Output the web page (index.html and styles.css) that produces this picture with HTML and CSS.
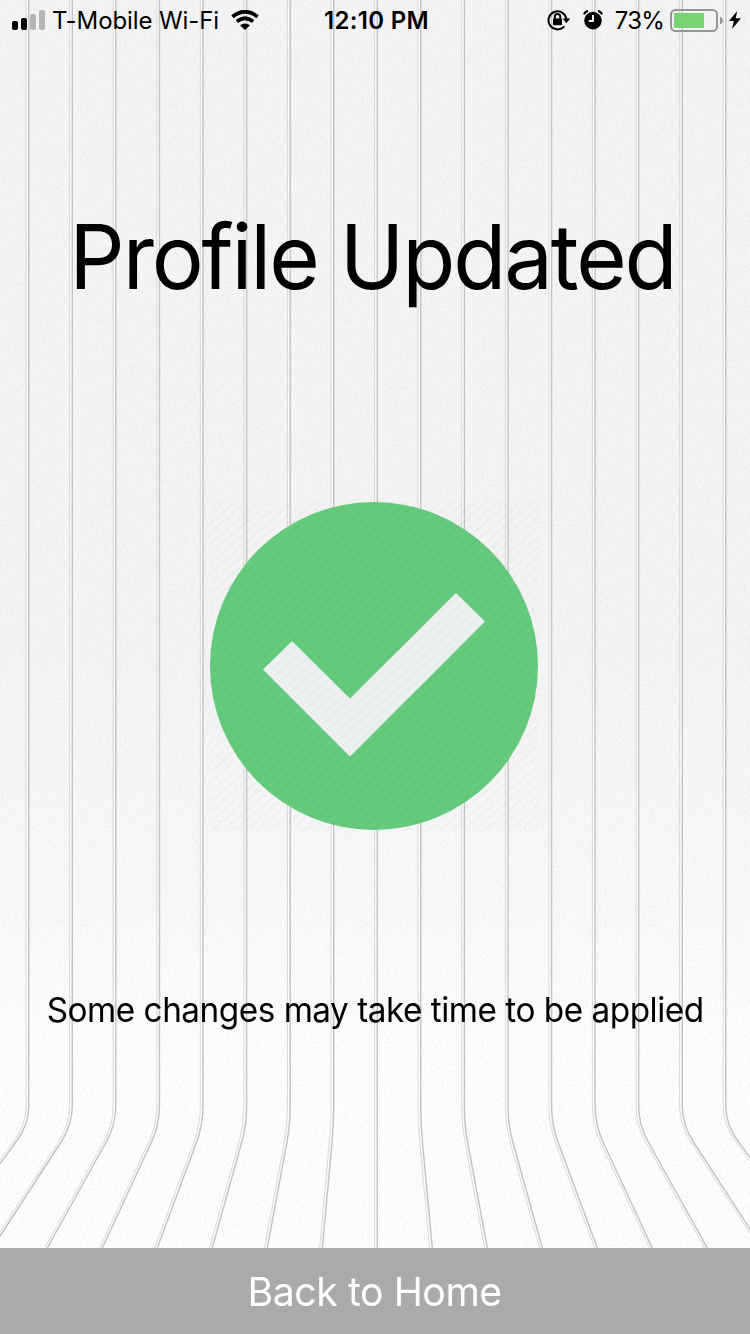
FILE: index.html
```html
<!DOCTYPE html>
<html lang="en">
<head>
<meta charset="utf-8">
<title>Profile Updated</title>
<link rel="stylesheet" href="styles.css">
</head>
<body>
<div class="screen">
  <svg class="backdrop" viewBox="0 0 750 1248" aria-hidden="true">
    <defs>
      <filter id="grain" x="0" y="0" width="100%" height="100%">
        <feTurbulence type="fractalNoise" baseFrequency="0.45" numOctaves="2" seed="4"/>
        <feColorMatrix values="0 0 0 0 0  0 0 0 0 0  0 0 0 0 0  0.08 0 0 0 -0.032"/>
      </filter>
      <g id="seams">
        <path d="M29 0V1106Q29 1125 16.2 1142L-62.5 1248"/>
        <path d="M72.5 0V1106Q72.5 1125 61.3 1142L-7.5 1248"/>
        <path d="M116 0V1106Q116 1125 106.4 1142L47.5 1248"/>
        <path d="M159.7 0V1106Q159.7 1125 151.7 1142L102.5 1248"/>
        <path d="M203.2 0V1106Q203.2 1125 196.8 1142L157.5 1248"/>
        <path d="M246.8 0V1106Q246.8 1125 242 1142L212.5 1248"/>
        <path d="M290.4 0V1106Q290.4 1125 287.2 1142L267.5 1248"/>
        <path d="M333.9 0V1106Q333.9 1125 332.3 1142L322.5 1248"/>
        <path d="M377.5 0V1248"/>
        <path d="M421 0V1106Q421 1125 422.6 1142L432.5 1248"/>
        <path d="M464.6 0V1106Q464.6 1125 467.8 1142L487.5 1248"/>
        <path d="M508.2 0V1106Q508.2 1125 513 1142L542.5 1248"/>
        <path d="M551.8 0V1106Q551.8 1125 558.2 1142L597.5 1248"/>
        <path d="M595.3 0V1106Q595.3 1125 603.3 1142L652.5 1248"/>
        <path d="M638.9 0V1106Q638.9 1125 648.5 1142L707.5 1248"/>
        <path d="M682.5 0V1106Q682.5 1125 693.7 1142L762.5 1248"/>
        <path d="M726 0V1106Q726 1125 738.8 1142L817.5 1248"/>
      </g>
    </defs>
    <rect width="750" height="1248" filter="url(#grain)"/>
    <use href="#seams" class="seam-glow" x="-1.4"/>
    <use href="#seams" class="seam-light" x="-2.9"/>
    <use href="#seams" class="seam-dark" x="-0.2"/>
  </svg>

  <header class="status">
    <div class="status-left">
      <svg class="signal" width="34" height="20" viewBox="0 0 34 20">
        <rect x="0" y="11" width="6" height="9" rx="2"/>
        <rect x="9" y="8" width="6" height="12" rx="2"/>
        <rect class="dim" x="18" y="4" width="6" height="16" rx="2"/>
        <rect class="dim" x="27" y="0" width="6" height="20" rx="2"/>
      </svg>
      <span class="carrier">T-Mobile Wi-Fi</span>
      <svg class="wifi" width="28" height="20" viewBox="0 0 28 20">
        <path class="arc" d="M1.4 6.800Q14-3.200 26.600 6.800"/>
        <path class="arc" d="M5.800 11.400Q14 5 22.200 11.400"/>
        <path d="M9 15.200Q14 11.600 19 15.200L14 20Z"/>
      </svg>
    </div>
    <time class="clock">12:10 PM</time>
    <div class="status-right">
      <svg class="lock" width="24" height="22" viewBox="0 0 24 22">
        <path class="ring" d="M17.2 17.4A9 9 0 1 1 19.4 10"/>
        <path d="M15.500 9.400H23.200L19.400 14.200Z"/>
        <rect x="6" y="9.400" width="9" height="6.800" rx="1"/>
        <path class="ring" d="M7.800 10V7.600a2.700 2.700 0 0 1 5.400 0V10"/>
      </svg>
      <svg class="alarm" width="20" height="20" viewBox="0 0 20 20">
        <circle cx="10" cy="10.600" r="8.800"/>
        <path class="bell" d="M1 4.400Q2 1.600 5 1M19 4.400Q18 1.600 15 1"/>
        <path class="hands" d="M10 5V11H5.700"/>
      </svg>
      <span class="percent">73%</span>
      <svg class="battery" width="54" height="23" viewBox="0 0 54 23">
        <rect class="case" x="1" y="1" width="46" height="21" rx="4.500"/>
        <rect class="charge" x="4" y="4" width="30" height="15"/>
        <path class="cap" d="M50 7.500Q53 9 53 11.500T50 15.500Z"/>
      </svg>
      <svg class="bolt" width="12" height="18" viewBox="0 0 12 18">
        <path d="M8.200 0L0 10H4.800L3 18L12 7.300H6.700Z"/>
      </svg>
    </div>
  </header>

  <main class="content">
    <h1 class="title">Profile Updated</h1>
    <svg class="badge" width="328" height="328" viewBox="0 0 328 328" role="img" aria-label="Success">
      <defs>
        <pattern id="hatch" width="7.500" height="7.500" patternUnits="userSpaceOnUse" patternTransform="rotate(49)">
          <rect width="3" height="7.500"/>
        </pattern>
      </defs>
      <circle class="disc" cx="164" cy="164" r="164"/>
      <path class="tick" d="M82 139L53 167.500L140 254.500L275 119.500L246 91L140 196.500Z"/>
      <rect class="hatching" width="328" height="328" fill="url(#hatch)"/>
    </svg>
    <p class="note">Some changes may take time to be applied</p>
  </main>

  <button class="home" type="button"><span class="home-label">Back to Home</span></button>
</div>
</body>
</html>
```

FILE: styles.css
```css
body {
  margin: 0;
  font-family: Inter, "Liberation Sans", sans-serif;
  color: #000;
}

.screen {
  position: relative;
  display: flex;
  flex-direction: column;
  width: 750px;
  height: 1334px;
  overflow: hidden;
  background: linear-gradient(#f5f5f5 0, #f5f5f5 650px, #f9f9f9 900px, #fefefe 1060px);
}

.backdrop {
  position: absolute;
  top: 0;
  left: 0;
  width: 750px;
  height: 1248px;
}

.seam-glow, .seam-light, .seam-dark { fill: none; }
.seam-glow { stroke: #fafafa; stroke-width: 2; }
.seam-light { stroke: #dadada; stroke-width: 1; }
.seam-dark { stroke: #c2c2c2; stroke-width: 1.4; }

.status, .content, .home { position: relative; }

.status {
  display: grid;
  grid-template-columns: 1fr auto 1fr;
  align-items: center;
  box-sizing: border-box;
  height: 40px;
  padding: 0 9px 0 12px;
  font-size: 24px;
  line-height: 40px;
}

.status-left, .status-right { display: flex; align-items: center; }
.status-right { justify-content: flex-end; }
.dim { fill: #b4b4b4; }
.carrier, .clock, .percent { padding-top: 2px; line-height: 38px; }
.carrier { margin-left: 6px; letter-spacing: -0.100px; white-space: nowrap; }
.wifi { margin-left: 12px; }
.arc { fill: none; stroke: #000; stroke-width: 3.800; }
.clock { font-weight: 600; letter-spacing: 0.300px; }
.ring { fill: none; stroke: #000; stroke-width: 2; }
.alarm { margin-left: 12px; }
.bell { fill: none; stroke: #000; stroke-width: 2; }
.hands { fill: none; stroke: #f5f5f5; stroke-width: 2; }
.percent { margin-left: 12px; letter-spacing: -0.800px; }
.battery { margin-left: 6px; }
.case { fill: none; stroke: #969696; stroke-width: 2; }
.charge { fill: #76d572; }
.cap { fill: #969696; }
.bolt { margin-left: 5px; }

.content {
  flex: 1;
  display: flex;
  flex-direction: column;
  align-items: center;
}

.title {
  margin: 162px 5px 0 0;
  font-size: 89.500px;
  font-weight: 400;
  line-height: 110px;
  letter-spacing: -2.250px;
  white-space: nowrap;
  transform: scaleX(0.97);
}

.badge { display: block; margin: 190px 2px 0 0; }
.disc { fill: #65ca7c; }
.tick { fill: #ecf0f1; }
.hatching { opacity: 0.016; }

.note {
  margin: 160px 0 0;
  font-size: 34px;
  line-height: 40px;
  letter-spacing: -0.500px;
  white-space: nowrap;
  transform: scaleX(0.98);
}

.home {
  height: 86px;
  padding: 2px 0 0;
  border: 0;
  background: #aaaaaa;
  color: #fff;
  font: 400 40px/84px Inter, "Liberation Sans", sans-serif;
  letter-spacing: -0.450px;
}

.home-label { display: inline-block; transform: scaleX(0.98); }
```
